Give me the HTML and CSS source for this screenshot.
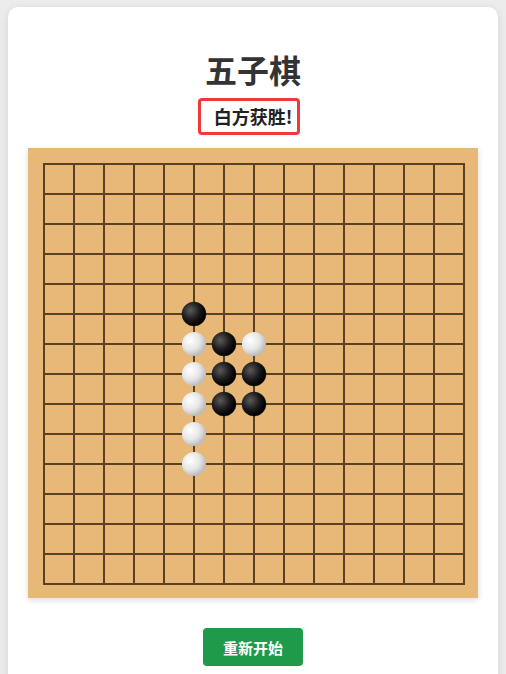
FILE: index.html
```html
<!DOCTYPE html>
<html lang="zh-CN">
<head>
    <meta charset="UTF-8">
    <meta name="viewport" content="width=device-width, initial-scale=1.0">
    <title>五子棋</title>
    <link rel="stylesheet" href="styles.css">
</head>
<body>

<div class="container">
    <h1>五子棋</h1>
    <div class="status">白方获胜!</div>

    <div class="board">
        <svg width="450" height="450" viewBox="0 0 450 450">
            <defs>
                <radialGradient id="blackStone" cx="35%" cy="35%" r="65%">
                    <stop offset="0%" stop-color="#5a5a5a"/>
                    <stop offset="60%" stop-color="#1a1a1a"/>
                    <stop offset="100%" stop-color="#000"/>
                </radialGradient>
                <radialGradient id="whiteStone" cx="35%" cy="35%" r="65%">
                    <stop offset="0%" stop-color="#ffffff"/>
                    <stop offset="60%" stop-color="#e6e6e6"/>
                    <stop offset="100%" stop-color="#bdbdbd"/>
                </radialGradient>
            </defs>
            <g class="grid">
                <!-- horizontal lines -->
                <line x1="16" y1="16" x2="436" y2="16"/>
                <line x1="16" y1="46" x2="436" y2="46"/>
                <line x1="16" y1="76" x2="436" y2="76"/>
                <line x1="16" y1="106" x2="436" y2="106"/>
                <line x1="16" y1="136" x2="436" y2="136"/>
                <line x1="16" y1="166" x2="436" y2="166"/>
                <line x1="16" y1="196" x2="436" y2="196"/>
                <line x1="16" y1="226" x2="436" y2="226"/>
                <line x1="16" y1="256" x2="436" y2="256"/>
                <line x1="16" y1="286" x2="436" y2="286"/>
                <line x1="16" y1="316" x2="436" y2="316"/>
                <line x1="16" y1="346" x2="436" y2="346"/>
                <line x1="16" y1="376" x2="436" y2="376"/>
                <line x1="16" y1="406" x2="436" y2="406"/>
                <line x1="15" y1="436" x2="437" y2="436"/>
                <!-- vertical lines -->
                <line x1="16" y1="15" x2="16" y2="437"/>
                <line x1="46" y1="16" x2="46" y2="436"/>
                <line x1="76" y1="16" x2="76" y2="436"/>
                <line x1="106" y1="16" x2="106" y2="436"/>
                <line x1="136" y1="16" x2="136" y2="436"/>
                <line x1="166" y1="16" x2="166" y2="436"/>
                <line x1="196" y1="16" x2="196" y2="436"/>
                <line x1="226" y1="16" x2="226" y2="436"/>
                <line x1="256" y1="16" x2="256" y2="436"/>
                <line x1="286" y1="16" x2="286" y2="436"/>
                <line x1="316" y1="16" x2="316" y2="436"/>
                <line x1="346" y1="16" x2="346" y2="436"/>
                <line x1="376" y1="16" x2="376" y2="436"/>
                <line x1="406" y1="16" x2="406" y2="436"/>
                <line x1="436" y1="15" x2="436" y2="437"/>
            </g>
            <!-- black stones -->
            <circle class="black" cx="166" cy="166" r="12"/>
            <circle class="black" cx="196" cy="196" r="12"/>
            <circle class="black" cx="196" cy="226" r="12"/>
            <circle class="black" cx="226" cy="226" r="12"/>
            <circle class="black" cx="196" cy="256" r="12"/>
            <circle class="black" cx="226" cy="256" r="12"/>
            <!-- white stones -->
            <circle class="white" cx="166" cy="196" r="12"/>
            <circle class="white" cx="166" cy="226" r="12"/>
            <circle class="white" cx="166" cy="256" r="12"/>
            <circle class="white" cx="166" cy="286" r="12"/>
            <circle class="white" cx="166" cy="316" r="12"/>
            <circle class="white" cx="226" cy="196" r="12"/>
        </svg>
    </div>

    <button type="button" class="restart">重新开始</button>
</div>

</body>
</html>
```

FILE: styles.css
```css
body {
    font-family: "Noto Sans CJK SC", "Noto Sans", Arial, sans-serif;
    margin: 0;
    padding: 7px 8px 0;
    background-color: #ececec;
}
.container {
    width: 490px;
    min-height: 700px;
    box-sizing: border-box;
    padding: 40px 20px 20px;
    display: flex;
    flex-direction: column;
    align-items: center;
    background-color: white;
    border-radius: 10px;
    box-shadow: 0 2px 10px rgba(0, 0, 0, 0.1);
}
h1 {
    margin: 0;
    font-size: 32px;
    line-height: 44px;
    font-weight: 700;
    color: #333;
}
.status {
    margin: 7px 8px 0 0;
    padding: 6px 5px 6px 13px;
    border: 3px solid #f03a3a;
    border-radius: 4px;
    font-size: 18px;
    line-height: 19px;
    font-weight: 700;
    color: #222;
}
.board {
    margin-top: 13px;
    width: 450px;
    height: 450px;
    background-color: #e8b878;
    box-shadow: 0 2px 6px rgba(0, 0, 0, 0.15);
}
.board svg {
    display: block;
}
.grid line {
    stroke: #5a4122;
    stroke-width: 2;
}
.black {
    fill: url(#blackStone);
    stroke: #111;
    stroke-width: 0.5;
}
.white {
    fill: url(#whiteStone);
}
.restart {
    margin-top: 30px;
    height: 38px;
    padding: 0 20px;
    border: none;
    border-radius: 4px;
    background-color: #1f9a4b;
    color: white;
    font-family: inherit;
    font-size: 15px;
    font-weight: 700;
    cursor: pointer;
}
```
